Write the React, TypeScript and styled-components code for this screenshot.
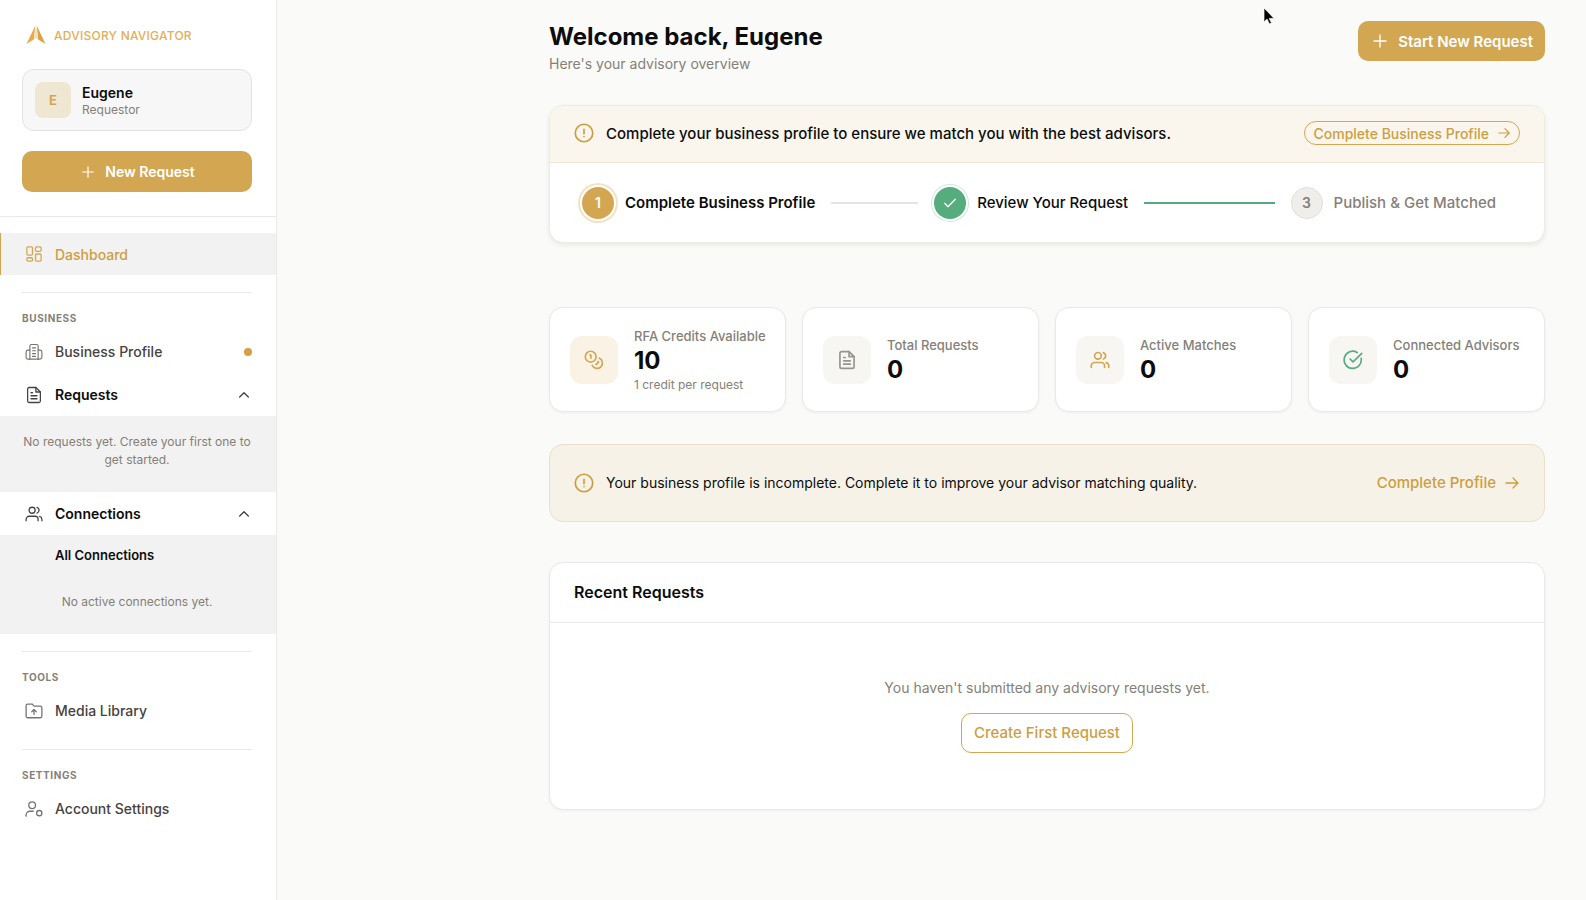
import React from "react";
import styled, { createGlobalStyle, css } from "styled-components";

const gold = "#d3a751";
const goldText = "#cd9e40";
const ink = "#0c0c0c";
const muted = "#857f79";
const line = "#e9e9e9";

const GlobalStyle = createGlobalStyle`
  * { box-sizing: border-box; }
  body { margin: 0; background: #fafaf8; color: ${ink}; font-family: Inter, "Liberation Sans", sans-serif; font-size: 14px; }
  h1, h2, p, ul, ol, dl, dd { margin: 0; padding: 0; }
  ul, ol { list-style: none; }
  a { color: inherit; text-decoration: none; }
  button { font: inherit; border: 0; cursor: pointer; }
  svg { display: block; flex: none; }
`;

const Page = styled.div`
  display: flex;
  min-height: 100vh;
`;

/* ---------- icons ---------- */

const paths = {
  plus: <path d="M12 3v18M3 12h18" />,
  dashboard: (
    <>
      <rect x="2.5" y="2.500" width="7.5" height="11" rx="1.5" />
      <rect x="14" y="2.5" width="7.5" height="6" rx="1.5" />
      <rect x="14" y="12" width="7.5" height="9.5" rx="1.5" />
      <rect x="2.5" y="17" width="7.5" height="4.5" rx="1.5" />
    </>
  ),
  building: (
    <>
      <path d="M6.5 21.5V4a2 2 0 0 1 2-2h7a2 2 0 0 1 2 2v17.5" />
      <path d="M6.5 9.5H4a2.500 2.500 0 0 0-2.500 2.500v7a2.500 2.500 0 0 0 2.500 2.500h16a2.500 2.500 0 0 0 2.500-2.500v-7a2.500 2.500 0 0 0-2.500-2.500h-2.500" />
      <path d="M10 6.5h4M10 10.3h4M10 14.1h4M10 17.9h4" />
    </>
  ),
  file: (
    <>
      <path d="M14.5 2H5.500a2 2 0 0 0-2 2v16a2 2 0 0 0 2 2h13a2 2 0 0 0 2-2V8z" />
      <path d="M14.5 2v6h6M8 9h2M8 13h8M8 17h8" />
    </>
  ),
  users: (
    <>
      <circle cx="9.5" cy="7" r="4" />
      <path d="M1.5 21v-2a4 4 0 0 1 4-4h8a4 4 0 0 1 4 4v2" />
      <path d="M16 3.2a4 4 0 0 1 0 7.6M22.5 21v-2a4 4 0 0 0-3-3.8" />
    </>
  ),
  folder: (
    <>
      <path d="M3.500 21h17a2 2 0 0 0 2-2V7.500a2 2 0 0 0-2-2h-8.500L9.800 2.800H3.500a2 2 0 0 0-2 2V19a2 2 0 0 0 2 2z" />
      <path d="M12 16.5v-6M9 13l3-3 3 3" />
    </>
  ),
  account: (
    <>
      <circle cx="9.500" cy="7" r="4.500" />
      <path d="M1.500 21.500v-1.500a5 5 0 0 1 5-5H11" />
      <circle cx="19" cy="17.500" r="3.500" />
    </>
  ),
  chevron: <path d="M5.500 15l6.500-6.500L18.500 15" />,
  arrow: <path d="M3 12h18M13.500 4.500L21 12l-7.500 7.500" />,
  check: <path d="M4 12.500l5 5 11-11" />,
  alert: (
    <>
      <circle cx="12" cy="12" r="10.500" />
      <path d="M12 7.500v5.500M12 16.200v.3" />
    </>
  ),
  coins: (
    <>
      <circle cx="8" cy="8" r="6.500" />
      <path d="M7 6h1.300v4M18.500 9.800A6.500 6.500 0 1 1 9.800 18.500M16.700 13.800l.8.800-3 3" />
    </>
  ),
  checkCircle: (
    <>
      <path d="M21.800 10A10.300 10.300 0 1 1 17 3" />
      <path d="M8.500 10.800l3.500 3.500L22.500 4" />
    </>
  ),
};

type IconName = keyof typeof paths;

function Icon({ name, size, weight = 2 }: { name: IconName; size: number; weight?: number }) {
  return (
    <svg width={size} height={size} viewBox="0 0 24 24" fill="none" stroke="currentColor" strokeWidth={weight} strokeLinecap="round" strokeLinejoin="round" aria-hidden="true">
      {paths[name]}
    </svg>
  );
}

/* ---------- sidebar ---------- */

const Sidebar = styled.aside`
  flex: none;
  width: 277px;
  background: #fff;
  border-right: 1px solid ${line};
`;

const SidebarTop = styled.div`
  padding: 25px 24px 24px 22px;
  border-bottom: 1px solid ${line};
`;

const Brand = styled.a`
  display: flex;
  align-items: center;
  gap: 8px;
  height: 20px;
  margin: 0 0 24px 4px;
  color: #e3ae56;
  font-size: 12px;
  font-weight: 500;
  letter-spacing: 0.02em;
`;

const ProfileCard = styled.div`
  display: flex;
  align-items: center;
  gap: 11px;
  padding: 12px;
  border: 1px solid #e2e2e2;
  border-radius: 12px;
  background: #f7f7f7;
`;

const Avatar = styled.div`
  display: grid;
  place-items: center;
  width: 36px;
  height: 36px;
  border-radius: 8px;
  background: #f0e7d3;
  color: ${gold};
  font-size: 13px;
  font-weight: 700;
`;

const ProfileName = styled.p`
  padding-top: 1px;
  font-size: 14px;
  line-height: 18px;
  font-weight: 600;
`;

const ProfileRole = styled.p`
  font-size: 12px;
  line-height: 16px;
  color: ${muted};
`;

const PrimaryButton = styled.button<{ $block?: boolean }>`
  display: flex;
  align-items: center;
  justify-content: center;
  gap: 10px;
  height: 40px;
  padding: 0 12px 0 14px;
  border-radius: 10px;
  background: ${gold};
  color: #fff;
  font-size: 15px;
  font-weight: 600;
  white-space: nowrap;
  ${({ $block }) => $block && css`
    width: 100%;
    height: 41px;
    margin-top: 20px;
    font-size: 14px;
  `}
`;

const Nav = styled.nav`
  padding-top: 16px;
`;

const NavRow = styled.a<{ $active?: boolean; $strong?: boolean }>`
  display: flex;
  align-items: center;
  gap: 12px;
  width: 100%;
  height: 43px;
  padding: 0 24px;
  border-left: 1px solid transparent;
  background: none;
  color: #45423f;
  font-size: 14px;
  font-weight: 500;
  text-align: left;
  svg { color: #77736f; }
  ${({ $strong }) => $strong && css`
    color: ${ink};
    font-weight: 600;
    svg { color: #454341; }
  `}
  ${({ $active }) => $active && css`
    height: 42px;
    border-left-color: ${gold};
    background: #f2f2f2;
    color: ${goldText};
    svg { color: ${gold}; }
  `}
`;

const RowEnd = styled.span`
  display: flex;
  margin-left: auto;
`;

const Dot = styled.span`
  width: 8px;
  height: 8px;
  border-radius: 50%;
  background: #d79f3d;
`;

const NavDivider = styled.hr`
  margin: 17px 24px 17px 22px;
  border: 0;
  border-top: 1px solid ${line};
`;

const NavHeading = styled.h2`
  padding: 0 22px;
  margin-bottom: 4px;
  color: ${muted};
  font-size: 10px;
  line-height: 16px;
  font-weight: 700;
  letter-spacing: 0.06em;
`;

const SubPanel = styled.div`
  background: #f2f2f2;
`;

const EmptyNote = styled.p<{ $tall?: boolean }>`
  padding: ${({ $tall }) => ($tall ? "17px 22px 23px 20px" : "24px 22px 23px 20px")};
  color: ${muted};
  font-size: 12px;
  line-height: 18px;
  text-align: center;
`;

const SubLink = styled.a`
  display: flex;
  align-items: center;
  height: 34px;
  padding: 6px 55px 0;
  font-size: 13px;
  font-weight: 600;
`;

/* ---------- main ---------- */

const Main = styled.main`
  flex: 1;
  min-width: 0;
  padding: 21px 41px 40px 272px;
`;

const PageHeader = styled.header`
  display: flex;
  align-items: flex-start;
  justify-content: space-between;
`;

const Title = styled.h1`
  font-size: 24px;
  line-height: 32px;
  font-weight: 700;
`;

const Subtitle = styled.p`
  font-size: 14px;
  line-height: 22px;
  color: ${muted};
`;

const Card = styled.section`
  overflow: hidden;
  border: 1px solid ${line};
  border-radius: 14px;
  background: #fff;
  box-shadow: 0 1px 3px rgba(0, 0, 0, 0.05);
`;

const SetupCard = styled(Card)`
  margin-top: 30px;
  border-color: #f0ebe2;
  box-shadow: 0 2px 5px rgba(0, 0, 0, 0.08);
`;

const Banner = styled.div`
  display: flex;
  align-items: center;
  gap: 12px;
  height: 57px;
  padding: 0 24px 2px;
  border-bottom: 1px solid #f2e5d3;
  background: #faf6ee;
  color: ${goldText};
`;

const BannerText = styled.p<{ $strong?: boolean }>`
  flex: 1;
  color: ${ink};
  font-size: ${({ $strong }) => ($strong ? "15px" : "14px")};
  font-weight: ${({ $strong }) => ($strong ? 500 : 400)};
`;

const PillLink = styled.a`
  display: flex;
  align-items: center;
  gap: 8px;
  height: 24px;
  padding: 0 8px;
  border: 1px solid ${gold};
  border-radius: 12px;
  color: ${goldText};
  font-size: 14px;
  font-weight: 500;
`;

const Stepper = styled.ol`
  display: flex;
  align-items: center;
  gap: 16px;
  height: 79px;
  padding: 0 48px 0 32px;
`;

const Step = styled.li<{ $muted?: boolean; $bold?: boolean }>`
  display: flex;
  align-items: center;
  gap: 11px;
  color: ${({ $muted }) => ($muted ? muted : ink)};
  font-size: 15px;
  font-weight: ${({ $bold }) => ($bold ? 600 : 500)};
`;

const tones = {
  current: css`background: ${gold}; color: #fff; box-shadow: 0 0 0 2px #fff, 0 0 0 4px #f2e3c2;`,
  done: css`background: #55ac7c; color: #fff; box-shadow: 0 0 0 2px #fff, 0 0 0 3px #cdeadb;`,
  next: css`background: #f0eeeb; color: ${muted}; border: 1px solid #e2dfdb;`,
};

const StepMark = styled.span<{ $tone: keyof typeof tones }>`
  display: grid;
  place-items: center;
  width: 32px;
  height: 32px;
  border-radius: 50%;
  font-size: 14px;
  font-weight: 600;
  ${({ $tone }) => tones[$tone]}
`;

const StepLine = styled.li<{ $done?: boolean; $grow: number }>`
  flex: ${({ $grow }) => $grow} 1 0;
  height: 2px;
  background: ${({ $done }) => ($done ? "#55a981" : "#e6e4e1")};
`;

const Stats = styled.div`
  display: grid;
  grid-template-columns: repeat(4, 1fr);
  gap: 16px;
  margin-top: 64px;
`;

const StatCard = styled(Card)`
  display: flex;
  align-items: center;
  gap: 16px;
  height: 105px;
  padding: 0 20px;
`;

const StatIcon = styled.div<{ $color: string; $warm?: boolean }>`
  display: grid;
  place-items: center;
  flex: none;
  width: 48px;
  height: 48px;
  border-radius: 12px;
  background: ${({ $warm }) => ($warm ? "#faf2e4" : "#f7f6f3")};
  color: ${({ $color }) => $color};
`;

const StatLabel = styled.p`
  color: ${muted};
  font-size: 13px;
  line-height: 20px;
  font-weight: 500;
  white-space: nowrap;
`;

const StatValue = styled.p`
  font-size: 24px;
  line-height: 30px;
  font-weight: 700;
`;

const StatNote = styled.p`
  color: ${muted};
  font-size: 12px;
  line-height: 18px;
`;

const Alert = styled.section`
  display: flex;
  align-items: center;
  gap: 12px;
  height: 78px;
  margin: 32px 0 40px;
  padding: 0 24px 1px;
  border: 1px solid #ebdfc8;
  border-radius: 14px;
  background: #f6f2e7;
  color: ${goldText};
`;

const TextLink = styled.a`
  display: flex;
  align-items: center;
  gap: 8px;
  font-size: 15px;
  font-weight: 500;
`;

const CardTitle = styled.h2`
  padding: 17px 24px 18px;
  border-bottom: 1px solid ${line};
  font-size: 16px;
  line-height: 24px;
  font-weight: 600;
`;

const EmptyState = styled.div`
  display: flex;
  flex-direction: column;
  align-items: center;
  gap: 14px;
  padding: 54px 24px 56px;
  color: ${muted};
  line-height: 22px;
`;

const OutlineButton = styled.button`
  height: 40px;
  padding: 0 12px;
  border: 1px solid ${gold};
  border-radius: 10px;
  background: #fff;
  color: ${goldText};
  font-size: 15px;
  font-weight: 500;
`;

const Pointer = styled.svg`
  position: absolute;
  top: 7px;
  right: 311px;
`;

const stats: { icon: IconName; color: string; label: string; value: number; note?: string; warm?: boolean }[] = [
  { icon: "coins", color: gold, label: "RFA Credits Available", value: 10, note: "1 credit per request", warm: true },
  { icon: "file", color: "#98948f", label: "Total Requests", value: 0 },
  { icon: "users", color: gold, label: "Active Matches", value: 0 },
  { icon: "checkCircle", color: "#55ac7c", label: "Connected Advisors", value: 0 },
];

export default function App() {
  return (
    <Page>
      <GlobalStyle />
      <Sidebar>
        <SidebarTop>
          <Brand href="#">
            <svg width="20" height="20" viewBox="0 0 20 20" aria-hidden="true">
              <path d="M9.300 0.500L0.500 19l7.300-4.500z" fill="#e5ab4f" />
              <path d="M10.700 0.500L19.500 19l-7.300-4.500z" fill="#dba144" />
              <path d="M10 0.500L7.800 14.500l2.200-1.200 2.200 1.200z" fill="#f6dfb8" />
            </svg>
            ADVISORY NAVIGATOR
          </Brand>
          <ProfileCard>
            <Avatar>E</Avatar>
            <div>
              <ProfileName>Eugene</ProfileName>
              <ProfileRole>Requestor</ProfileRole>
            </div>
          </ProfileCard>
          <PrimaryButton type="button" $block>
            <Icon name="plus" size={14} />
            New Request
          </PrimaryButton>
        </SidebarTop>
        <Nav>
          <NavRow href="#" $active>
            <Icon name="dashboard" size={18} weight={1.7} />
            Dashboard
          </NavRow>
          <NavDivider />
          <NavHeading>BUSINESS</NavHeading>
          <NavRow href="#">
            <Icon name="building" size={18} weight={1.5} />
            Business Profile
            <RowEnd><Dot /></RowEnd>
          </NavRow>
          <NavRow as="button" type="button" aria-expanded="true" $strong>
            <Icon name="file" size={18} weight={1.7} />
            Requests
            <RowEnd><Icon name="chevron" size={16} /></RowEnd>
          </NavRow>
          <SubPanel>
            <EmptyNote $tall>No requests yet. Create your first one to get started.</EmptyNote>
          </SubPanel>
          <NavRow as="button" type="button" aria-expanded="true" $strong>
            <Icon name="users" size={18} weight={1.7} />
            Connections
            <RowEnd><Icon name="chevron" size={16} /></RowEnd>
          </NavRow>
          <SubPanel>
            <SubLink href="#">All Connections</SubLink>
            <EmptyNote>No active connections yet.</EmptyNote>
          </SubPanel>
          <NavDivider />
          <NavHeading>TOOLS</NavHeading>
          <NavRow href="#">
            <Icon name="folder" size={18} weight={1.7} />
            Media Library
          </NavRow>
          <NavDivider />
          <NavHeading>SETTINGS</NavHeading>
          <NavRow href="#">
            <Icon name="account" size={18} weight={1.7} />
            Account Settings
          </NavRow>
        </Nav>
      </Sidebar>
      <Main>
        <PageHeader>
          <div>
            <Title>Welcome back, Eugene</Title>
            <Subtitle>Here's your advisory overview</Subtitle>
          </div>
          <PrimaryButton type="button">
            <Icon name="plus" size={16} />
            Start New Request
          </PrimaryButton>
        </PageHeader>
        <SetupCard>
          <Banner>
            <Icon name="alert" size={20} />
            <BannerText $strong>Complete your business profile to ensure we match you with the best advisors.</BannerText>
            <PillLink href="#">
              Complete Business Profile
              <Icon name="arrow" size={14} />
            </PillLink>
          </Banner>
          <Stepper>
            <Step $bold>
              <StepMark $tone="current">1</StepMark>
              Complete Business Profile
            </Step>
            <StepLine $grow={2} aria-hidden="true" />
            <Step>
              <StepMark $tone="done"><Icon name="check" size={16} /></StepMark>
              Review Your Request
            </Step>
            <StepLine $grow={3} $done aria-hidden="true" />
            <Step $muted>
              <StepMark $tone="next">3</StepMark>
              Publish &amp; Get Matched
            </Step>
          </Stepper>
        </SetupCard>
        <Stats>
          {stats.map((s) => (
            <StatCard key={s.label}>
              <StatIcon $color={s.color} $warm={s.warm}><Icon name={s.icon} size={20} /></StatIcon>
              <div>
                <StatLabel>{s.label}</StatLabel>
                <StatValue>{s.value}</StatValue>
                {s.note && <StatNote>{s.note}</StatNote>}
              </div>
            </StatCard>
          ))}
        </Stats>
        <Alert>
          <Icon name="alert" size={20} />
          <BannerText>Your business profile is incomplete. Complete it to improve your advisor matching quality.</BannerText>
          <TextLink href="#">
            Complete Profile
            <Icon name="arrow" size={16} />
          </TextLink>
        </Alert>
        <Card>
          <CardTitle>Recent Requests</CardTitle>
          <EmptyState>
            <p>You haven't submitted any advisory requests yet.</p>
            <OutlineButton type="button">Create First Request</OutlineButton>
          </EmptyState>
        </Card>
      </Main>
      <Pointer width="12" height="18" viewBox="0 0 12 18" aria-hidden="true">
        <path d="M1 1v14l3-3 2.500 5 2-1-2.300-4.600H11z" fill="#000" stroke="#fff" strokeWidth="0.700" />
      </Pointer>
    </Page>
  );
}
